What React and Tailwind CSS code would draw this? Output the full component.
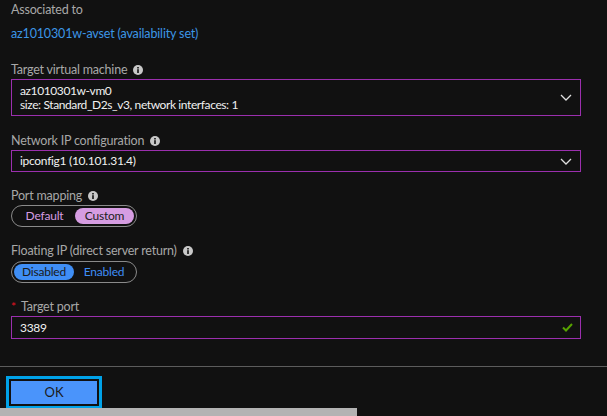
import React from 'react';

const Info = () => (
  <svg width="10" height="10" viewBox="0 0 10 10" className="ml-[6px] inline-block">
    <circle cx="5" cy="5" r="5" fill="#c8c8c8" />
    <rect x="4.2" y="4.2" width="1.6" height="3.8" fill="#111" />
    <rect x="4.2" y="2" width="1.6" height="1.5" fill="#111" />
  </svg>
);

const Chevron = () => (
  <svg width="12" height="7" viewBox="0 0 12 7" className="shrink-0">
    <path d="M1 1l5 5 5-5" fill="none" stroke="#e0e0e0" strokeWidth="1.3" />
  </svg>
);

const Label = ({ children, info = true, required = false }) => (
  <div className="flex items-center h-[18px] text-[12.5px] tracking-[-0.2px] text-[#a8a8a8]">
    {required && <span className="text-[#e81123] mr-[5px] text-[12px]">*</span>}
    {children}
    {info && <Info />}
  </div>
);

const App = () => {
  return (
    <div className="w-[607px] h-[416px] bg-[#111111] flex flex-col overflow-hidden" style={{ fontFamily: 'Lato, "Noto Sans", sans-serif' }}>
      <div className="flex flex-col pl-[11px] pr-[26px] pt-[1px]">
        <Label info={false}>Associated to</Label>
        <div className="mt-[6px] h-[18px] flex items-center text-[12.5px] tracking-[-0.15px] text-[#3c96e6]">az1010301w-avset (availability set)</div>

        <div className="mt-[18px]"><Label>Target virtual machine</Label></div>
        <div className="h-[37px] border border-[#9b2fae] flex items-center pl-[8px] pr-[8px]">
          <div className="flex-1 flex flex-col text-[12px] tracking-[-0.4px] text-[#f0f0f0] leading-[14px]">
            <span>az1010301w-vm0</span>
            <span>size: Standard_D2s_v3, network interfaces: 1</span>
          </div>
          <Chevron />
        </div>

        <div className="mt-[16px]"><Label>Network IP configuration</Label></div>
        <div className="h-[22px] border border-[#9b2fae] flex items-center pl-[8px] pr-[8px]">
          <span className="flex-1 text-[12px] tracking-[-0.3px] text-[#f0f0f0]">ipconfig1 (10.101.31.4)</span>
          <Chevron />
        </div>

        <div className="mt-[15px]"><Label>Port mapping</Label></div>
        <div className="w-[126px] h-[22px] border border-[#8a8a8a] rounded-full flex items-center p-[2px] text-[12px] tracking-[-0.2px]">
          <span className="flex-1 text-center text-[#d79ee3]">Default</span>
          <span className="w-[59px] h-[16px] rounded-full bg-[#d69de2] text-[#222] flex items-center justify-center">Custom</span>
        </div>

        <div className="mt-[15px]"><Label>Floating IP (direct server return)</Label></div>
        <div className="mt-[1px] w-[126px] h-[22px] border border-[#8a8a8a] rounded-full flex items-center p-[2px] text-[12px] tracking-[-0.2px]">
          <span className="w-[60px] h-[16px] rounded-full bg-[#3f8ef5] text-[#1a1a1a] flex items-center justify-center">Disabled</span>
          <span className="flex-1 text-center text-[#3f8ef5]">Enabled</span>
        </div>

        <div className="mt-[15px]"><Label info={false} required>Target port</Label></div>
        <div className="h-[23px] border border-[#9b2fae] flex items-center pl-[8px] pr-[7px]">
          <span className="flex-1 text-[12px] tracking-[-0.3px] text-[#f0f0f0]">3389</span>
          <svg width="11" height="9" viewBox="0 0 11 9">
            <path d="M1 4.5l3 3L10 1" fill="none" stroke="#57a300" strokeWidth="2" />
          </svg>
        </div>
      </div>

      <div className="mt-[27px] h-px bg-[#5c5c5c]" />

      <div className="pl-[6px] mt-[9px]">
        <div className="w-[96px] h-[33px] border-[3px] border-[#00a2e8] bg-[#111]">
          <div className="w-full h-full border-[2px] border-[#111] bg-[#4a94fb] flex items-center justify-center text-[13px] text-[#1b1b1b]">OK</div>
        </div>
      </div>
      <div className="-mt-[1px] w-[357px] h-[10px] bg-[#b3b3b3]" />
    </div>
  );
};

export default App;
